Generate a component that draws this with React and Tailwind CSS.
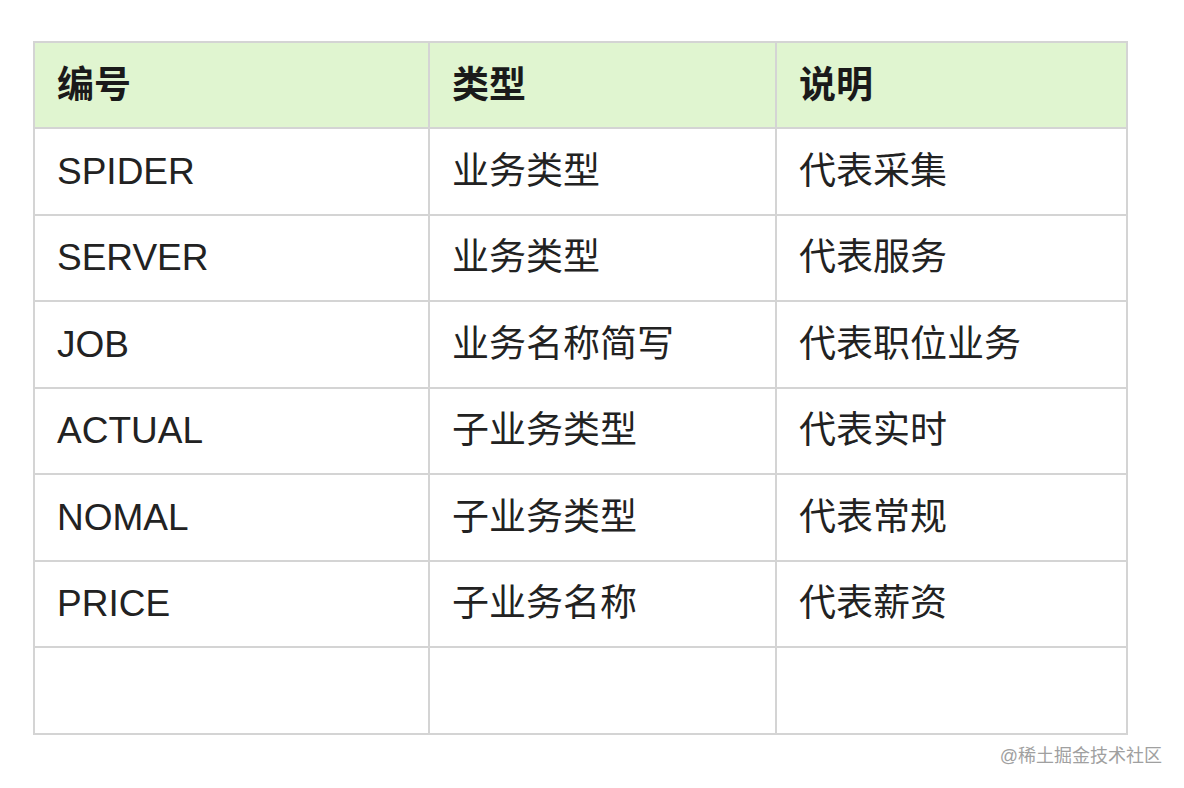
import React from "react";

const rows = [
  ["SPIDER", "业务类型", "代表采集"],
  ["SERVER", "业务类型", "代表服务"],
  ["JOB", "业务名称简写", "代表职位业务"],
  ["ACTUAL", "子业务类型", "代表实时"],
  ["NOMAL", "子业务类型", "代表常规"],
  ["PRICE", "子业务名称", "代表薪资"],
  ["", "", ""],
];

const font = { fontFamily: '"Liberation Sans", "Noto Sans CJK SC", sans-serif' };

export default function App() {
  return (
    <div className="w-[1184px] h-[788px] bg-white relative" style={font}>
      <div className="pl-[33px] pt-[41px]">
        <table className="border-collapse table-fixed w-[1093px] text-[37px] leading-none text-[#222]">
          <colgroup>
            <col className="w-[395px]" />
            <col className="w-[347px]" />
            <col className="w-[351px]" />
          </colgroup>
          <thead>
            <tr className="bg-[#e0f5d0]">
              {["编号", "类型", "说明"].map((h) => (
                <th
                  key={h}
                  className="border-2 border-[#d4d4d4] h-[86px] px-[22px] text-left font-bold text-[#1a1a1a]"
                >
                  {h}
                </th>
              ))}
            </tr>
          </thead>
          <tbody>
            {rows.map((r, i) => (
              <tr key={i}>
                {r.map((c, j) => (
                  <td key={j} className="border-2 border-[#d4d4d4] h-[86.5px] px-[22px]">
                    {c}
                  </td>
                ))}
              </tr>
            ))}
          </tbody>
        </table>
      </div>
      <div className="absolute right-[22px] top-[743px] text-[18px] text-[#a0a0a0]">
        @稀土掘金技术社区
      </div>
    </div>
  );
}
